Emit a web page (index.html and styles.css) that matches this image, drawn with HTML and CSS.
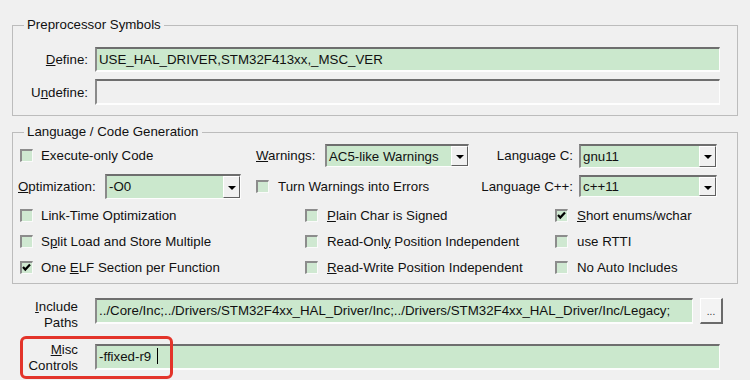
FILE: index.html
```html
<!DOCTYPE html>
<html>
<head>
<meta charset="utf-8">
<link rel="stylesheet" href="styles.css">
</head>
<body>
<div class="page">
  <fieldset class="group g1">
    <legend>Preprocessor Symbols</legend>
    <div class="frow">
      <label class="flabel"><u>D</u>efine:</label>
      <div class="field">USE_HAL_DRIVER,STM32F413xx,_MSC_VER</div>
    </div>
    <div class="frow">
      <label class="flabel">U<u>n</u>define:</label>
      <div class="field disabled"></div>
    </div>
  </fieldset>

  <fieldset class="group g2">
    <legend>Language / Code Generation</legend>
    <div class="lrow r1">
      <div class="cell a1"><span class="chk"></span><span>Execute-only Code</span></div>
      <div class="cell b1">
        <label class="lbl-w"><u>W</u>arnings:</label>
        <div class="combo warn"><span class="ctext">AC5-like Warnings</span><span class="cbtn"><i class="tri"></i></span></div>
      </div>
      <div class="cell c1">
        <label class="lbl-c">Language C:</label>
        <div class="combo lang"><span class="ctext">gnu11</span><span class="cbtn"><i class="tri"></i></span></div>
      </div>
    </div>
    <div class="lrow r2">
      <div class="cell a2">
        <label class="lbl-o"><u>O</u>ptimization:</label>
        <div class="combo opt"><span class="ctext">-O0</span><span class="cbtn"><i class="tri"></i></span></div>
      </div>
      <div class="cell b2"><span class="chk"></span><span>Turn Warnings into Errors</span></div>
      <div class="cell c1">
        <label class="lbl-c">Language C++:</label>
        <div class="combo lang cpp"><span class="ctext">c++11</span><span class="cbtn"><i class="tri"></i></span></div>
      </div>
    </div>
    <div class="lrow r3">
      <div class="cell ca"><span class="chk"></span><span>Link-Time Optimization</span></div>
      <div class="cell cb"><span class="chk"></span><span><u>P</u>lain Char is Signed</span></div>
      <div class="cell cc"><span class="chk on"><svg width="13" height="13" viewBox="0 0 13 13"><polyline points="3,6 5.3,8.6 10,3.4" fill="none" stroke="#000" stroke-width="2.2"/></svg></span><span><u>S</u>hort enums/wchar</span></div>
    </div>
    <div class="lrow r4">
      <div class="cell ca"><span class="chk"></span><span>S<u>p</u>lit Load and Store Multiple</span></div>
      <div class="cell cb"><span class="chk"></span><span>Read-Onl<u>y</u> Position Independent</span></div>
      <div class="cell cc"><span class="chk"></span><span>use RTTI</span></div>
    </div>
    <div class="lrow r5">
      <div class="cell ca"><span class="chk on"><svg width="13" height="13" viewBox="0 0 13 13"><polyline points="3,6 5.3,8.6 10,3.4" fill="none" stroke="#000" stroke-width="2.2"/></svg></span><span>One <u>E</u>LF Section per Function</span></div>
      <div class="cell cb"><span class="chk"></span><span><u>R</u>ead-Write Position Independent</span></div>
      <div class="cell cc"><span class="chk"></span><span>No Auto Includes</span></div>
    </div>
  </fieldset>

  <div class="brow inc">
    <label class="blabel"><u>I</u>nclude<br>Paths</label>
    <div class="field incf">../Core/Inc;../Drivers/STM32F4xx_HAL_Driver/Inc;../Drivers/STM32F4xx_HAL_Driver/Inc/Legacy;</div>
    <div class="dots">...</div>
  </div>
  <div class="brow misc">
    <label class="blabel"><u>M</u>isc<br>Controls</label>
    <div class="field miscf">-ffixed-r9<span class="caret"></span></div>
    <div class="highlight"></div>
  </div>
  <div class="brow last">
    <div class="field lastf"></div>
  </div>
</div>
</body>
</html>
```

FILE: styles.css
```css
html, body {
  margin: 0;
  background: #f0f0f0;
  overflow: hidden;
}
body {
  font-family: "Liberation Sans", Arial, sans-serif;
  font-size: 13.3px;
  color: #111;
}
u {
  text-underline-offset: 1px;
}
.page {
  padding: 17px 0 0 12px;
  width: 726px;
}
.group {
  box-sizing: border-box;
  width: 726px;
  min-width: 0;
  margin: 0;
  border: 1px solid #bcbcbc;
  padding: 0;
}
.group legend {
  margin-left: 11px;
  padding: 0 3px;
  line-height: 16px;
}
.g1 {
  padding: 14px 0 10px 0;
}
.g2 {
  margin-top: 8px;
  padding: 2px 0 3px 0;
}
.frow {
  display: flex;
  align-items: center;
}
.frow + .frow {
  margin-top: 7px;
}
.flabel {
  width: 75px;
  margin-right: 7px;
  text-align: right;
}
.field {
  box-sizing: border-box;
  width: 625px;
  height: 25px;
  line-height: 21px;
  padding: 0 3px 0 2px;
  background: #cbe8cd;
  border-top: 2px solid #6e6e6e;
  border-left: 2px solid #8a8a8a;
  border-right: 1px solid #fdfdfd;
  border-bottom: 2px solid #fdfdfd;
  white-space: nowrap;
  overflow: hidden;
}
.field.disabled {
  height: 26px;
  background: #f0f0f0;
}

.lrow {
  display: flex;
  align-items: center;
}
.r1 { height: 27px; }
.r2 { height: 34px; }
.r3 { height: 25px; }
.r4 { height: 26px; }
.r5 { height: 26px; }
.cell {
  display: flex;
  align-items: center;
  box-sizing: border-box;
  white-space: nowrap;
}
.a1 { width: 243px; padding-left: 7px; }
.b1 { width: 213px; }
.c1 { flex: 1; }
.a2 { width: 243px; padding-left: 5px; }
.b2 { width: 213px; }
.ca { width: 292px; padding-left: 7px; }
.cb { width: 250px; }
.cc { flex: 1; }

.chk {
  box-sizing: border-box;
  width: 13px;
  height: 13px;
  margin-right: 8px;
  background: #cfe8d1;
  border-top: 2px solid #8c8c8c;
  border-left: 2px solid #8c8c8c;
  border-right: 1px solid #fafafa;
  border-bottom: 1px solid #fafafa;
  flex: none;
  position: relative;
}
.chk svg {
  position: absolute;
  left: -2px;
  top: -2px;
}
.b2 .chk, .cb .chk { margin-right: 9px; }
.cc .chk { margin-right: 9px; }

.lbl-w { width: 69px; }
.lbl-c { width: 104px; margin-right: 6px; text-align: right; }
.lbl-o { width: 87px; }

.combo {
  box-sizing: border-box;
  display: flex;
  align-items: stretch;
  height: 23px;
  background: #cbe8cd;
  border-top: 2px solid #6e6e6e;
  border-left: 2px solid #8a8a8a;
  border-right: 1px solid #fdfdfd;
  border-bottom: 1px solid #fdfdfd;
}
.combo.warn { width: 144px; }
.combo.lang { width: 138px; height: 24px; }
.combo.cpp { height: 22px; }
.combo.opt { width: 136px; height: 25px; }
.ctext {
  flex: 1;
  padding-left: 2px;
  display: flex;
  align-items: center;
}
.cbtn {
  width: 17px;
  flex: none;
  display: flex;
  align-items: center;
  justify-content: center;
  background: #f0f0f0;
  border-top: 1px solid #fff;
  border-left: 1px solid #fff;
  border-right: 1px solid #5f5f5f;
  border-bottom: 1px solid #5f5f5f;
  box-sizing: border-box;
}
.tri {
  width: 0;
  height: 0;
  border-left: 4px solid transparent;
  border-right: 4px solid transparent;
  border-top: 4px solid #000;
  margin-top: 2px;
}

.brow {
  display: flex;
  align-items: flex-start;
  position: relative;
}
.inc { margin-top: 14px; }
.misc { margin-top: 13px; }
.last { margin-top: 14px; }
.blabel {
  width: 66px;
  margin-right: 17px;
  text-align: right;
  line-height: 16px;
  margin-top: 1px;
}
.misc .blabel { margin-top: -2px; }
.incf {
  width: 598px;
  height: 26px;
}
.miscf {
  height: 26px;
}
.lastf {
  margin-left: 88px;
  width: 627px;
  height: 4px;
  border-bottom: 0;
}
.dots {
  box-sizing: border-box;
  margin-left: 7px;
  width: 23px;
  height: 26px;
  border-top: 1px solid #fff;
  border-left: 1px solid #fff;
  border-right: 2px solid #6a6a6a;
  border-bottom: 2px solid #6a6a6a;
  background: #f3f3f3;
  font-size: 10px;
  line-height: 26px;
  text-align: center;
  color: #333;
}
.caret {
  display: inline-block;
  width: 1px;
  height: 16px;
  margin-left: 6px;
  background: #000;
  vertical-align: -3px;
}
.highlight {
  position: absolute;
  left: 8px;
  top: -8px;
  width: 153px;
  height: 43px;
  box-sizing: border-box;
  border: 3px solid #e3342a;
  border-radius: 6px;
}
```
